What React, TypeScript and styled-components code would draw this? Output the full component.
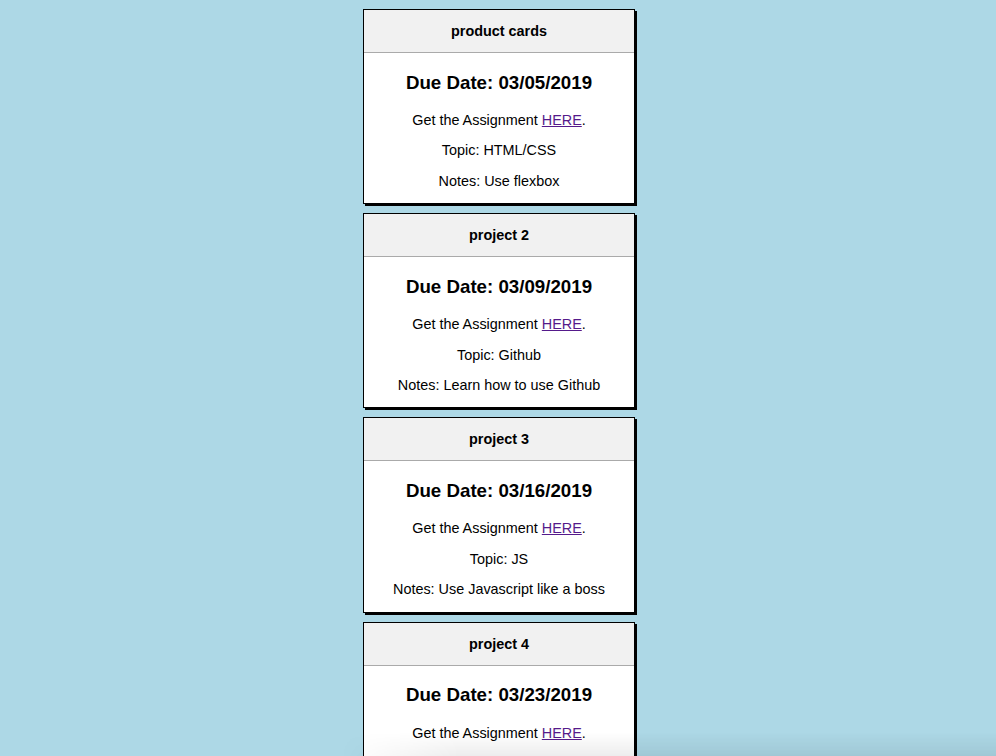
import React from "react";
import styled, { createGlobalStyle } from "styled-components";

const Global = createGlobalStyle`
  html, body {
    margin: 0;
    padding: 0;
    background: #add8e6;
  }
  body {
    font-family: "Liberation Sans", Arial, Helvetica, sans-serif;
    color: #000;
  }
`;

const Page = styled.main`
  display: flex;
  flex-direction: column;
  align-items: center;
  gap: 9px;
  padding: 9px 0 0 2px;
  height: 756px;
  overflow: hidden;
  box-sizing: border-box;
`;

const Card = styled.section`
  width: 270px;
  background: #fff;
  border: 1px solid #000;
  box-shadow: 2px 2px 0 #000;
  text-align: center;
  flex-shrink: 0;
`;

const Header = styled.header`
  background: #f1f1f1;
  border-bottom: 1px solid #aaa;
  height: 42px;
  display: flex;
  align-items: center;
  justify-content: center;
  font-size: 14.4px;
  font-weight: bold;
`;

const Body = styled.div`
  display: flow-root;
`;

const Due = styled.h3`
  font-size: 18.72px;
  line-height: 22px;
  font-weight: bold;
  margin: 18.5px 0;
`;

const Line = styled.p`
  font-size: 14.4px;
  line-height: 16px;
  margin: 14.4px 0;
`;

const Link = styled.a`
  color: #551a8b;
  text-decoration: underline;
`;

const BottomShade = styled.div`
  position: fixed;
  left: 340px;
  right: 0;
  bottom: 0;
  height: 24px;
  pointer-events: none;
  background: linear-gradient(to bottom, rgba(0, 0, 0, 0), rgba(0, 0, 0, 0.07));
  -webkit-mask-image: linear-gradient(to right, transparent 0, #000 120px);
  mask-image: linear-gradient(to right, transparent 0, #000 120px);
`;

type Project = { title: string; due: string; topic?: string; notes?: string };

const projects: Project[] = [
  { title: "product cards", due: "03/05/2019", topic: "HTML/CSS", notes: "Use flexbox" },
  { title: "project 2", due: "03/09/2019", topic: "Github", notes: "Learn how to use Github" },
  { title: "project 3", due: "03/16/2019", topic: "JS", notes: "Use Javascript like a boss" },
  { title: "project 4", due: "03/23/2019" },
];

export default function App() {
  return (
    <>
      <Global />
      <Page>
        {projects.map((p) => (
          <Card key={p.title}>
            <Header>{p.title}</Header>
            <Body>
              <Due>Due Date: {p.due}</Due>
              <Line>
                Get the Assignment <Link href="#">HERE</Link>.
              </Line>
              {p.topic ? <Line>Topic: {p.topic}</Line> : <Line>&nbsp;</Line>}
              {p.notes ? <Line>Notes: {p.notes}</Line> : null}
            </Body>
          </Card>
        ))}
      </Page>
      <BottomShade />
    </>
  );
}
